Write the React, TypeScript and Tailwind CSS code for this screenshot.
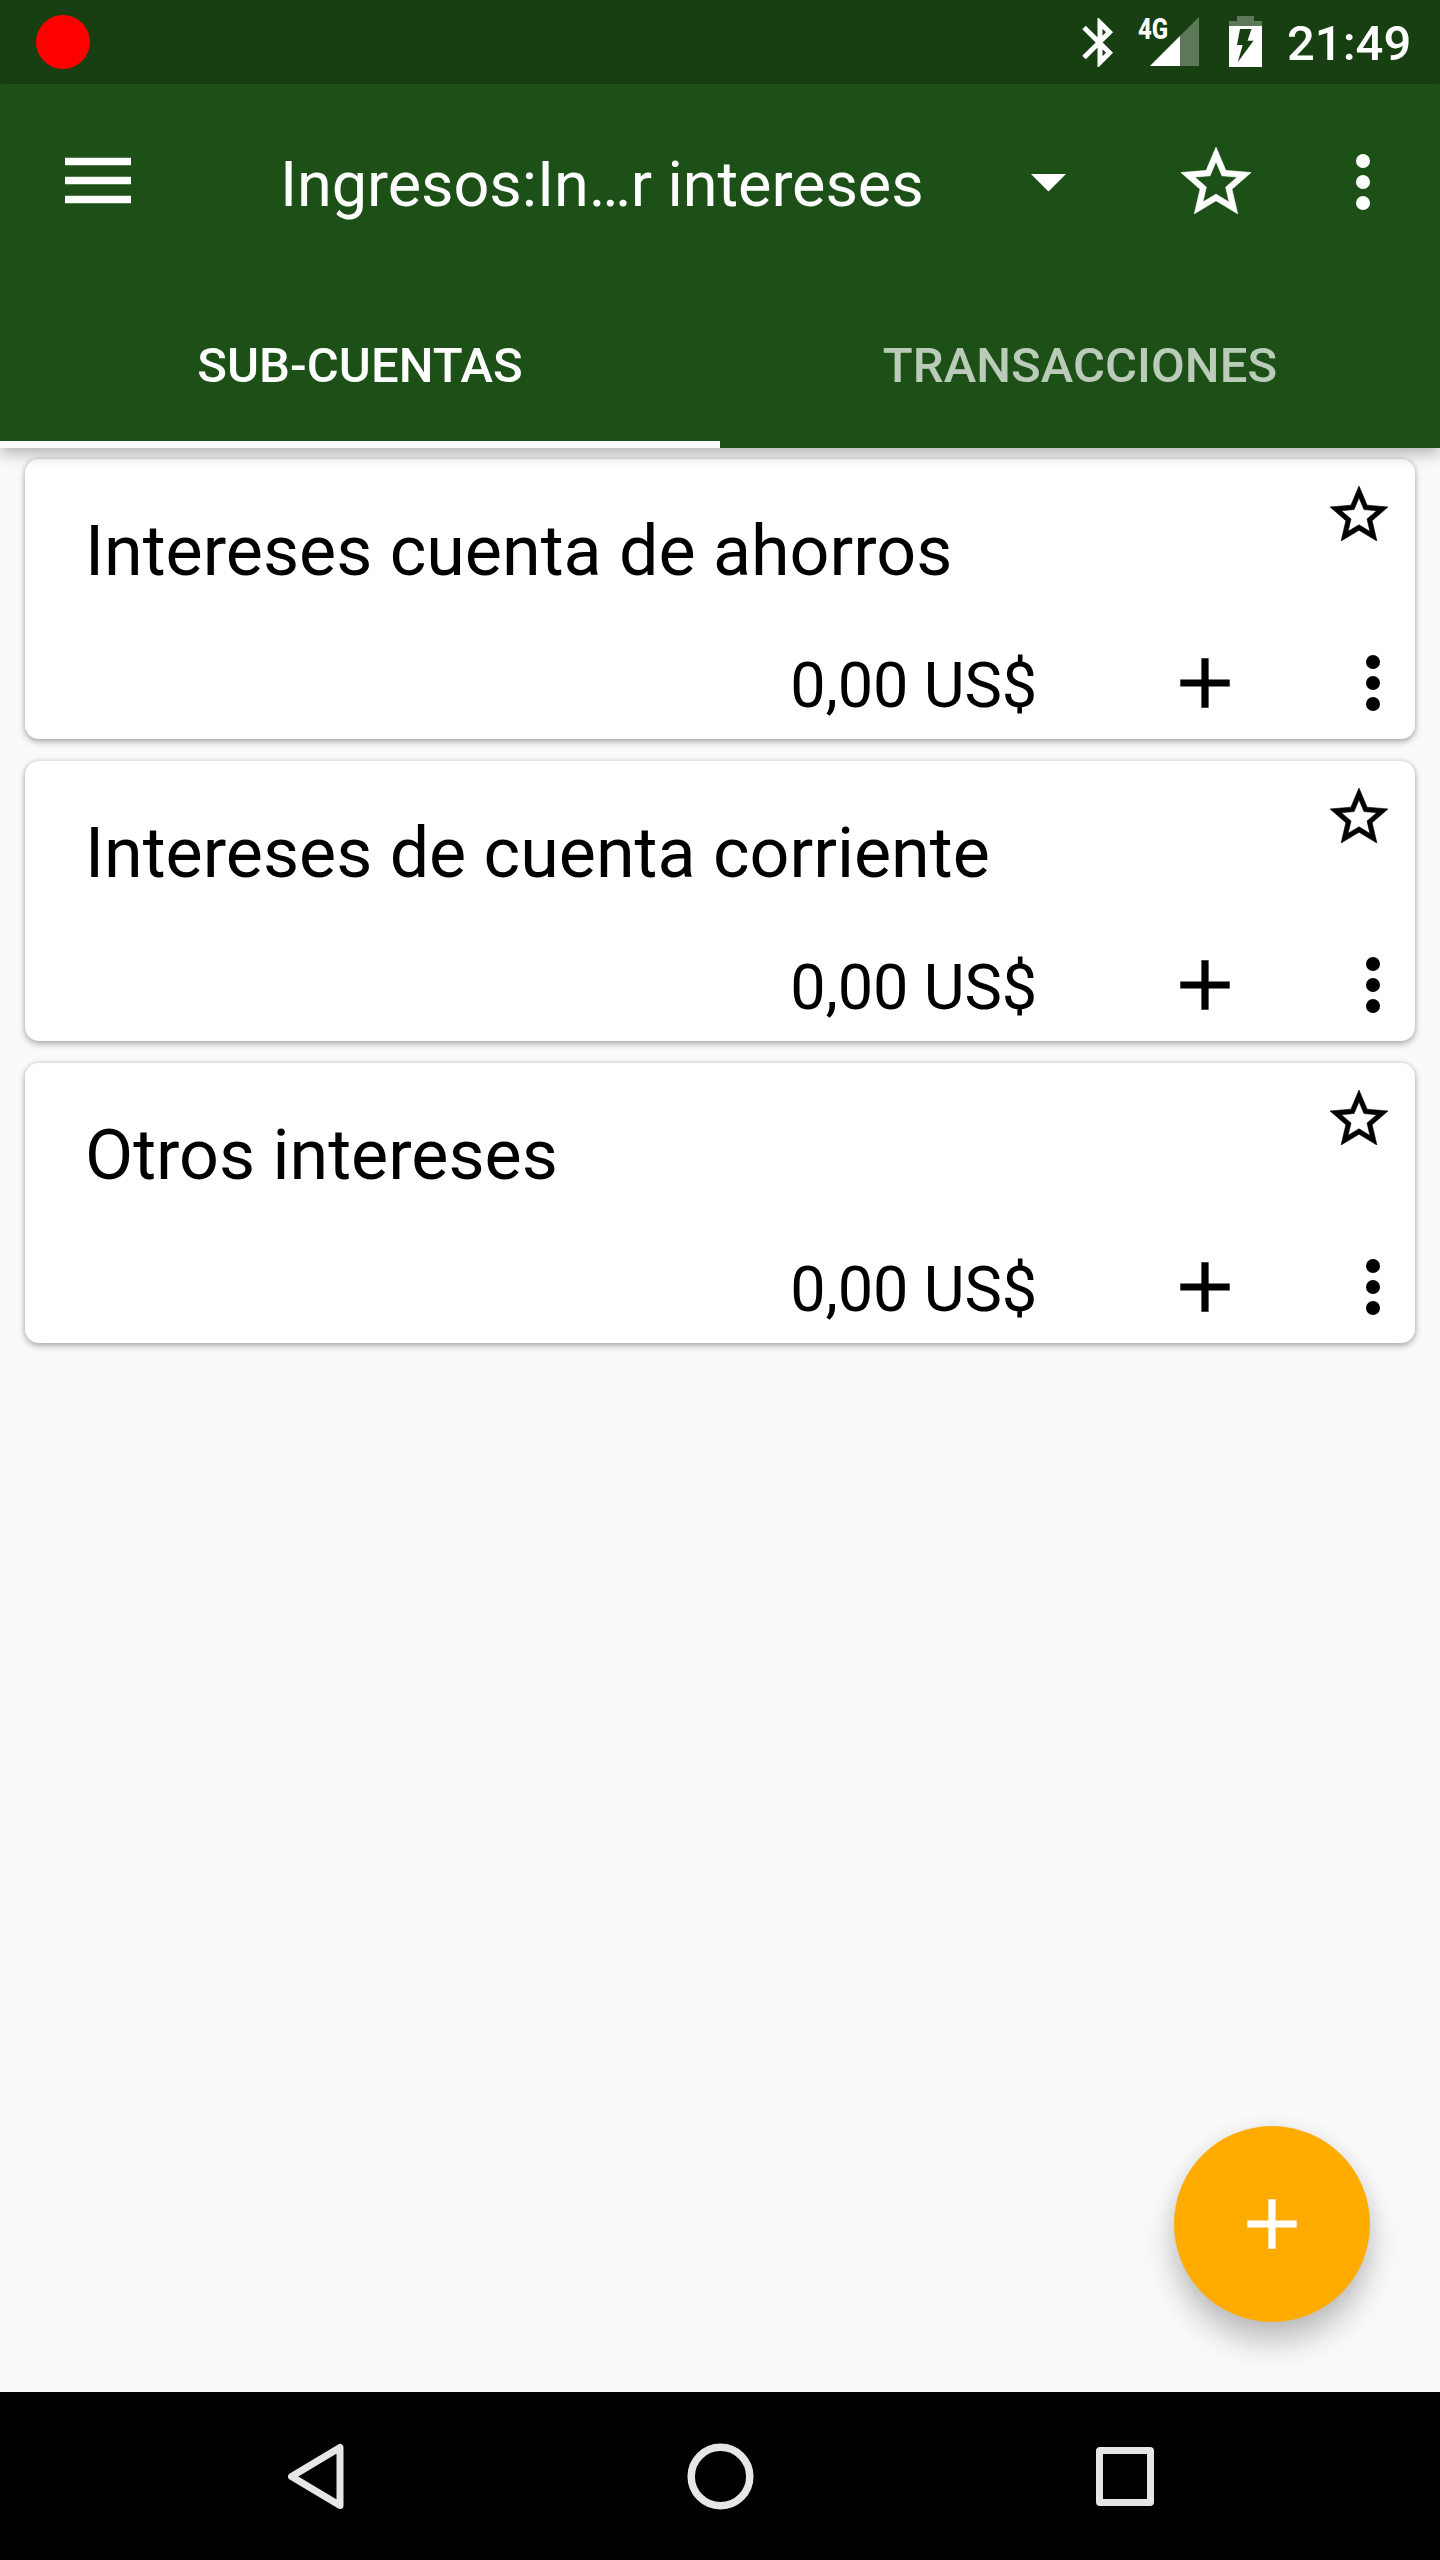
const accounts = [
  { name: "Intereses cuenta de ahorros", balance: "0,00 US$" },
  { name: "Intereses de cuenta corriente", balance: "0,00 US$" },
  { name: "Otros intereses", balance: "0,00 US$" },
];

function StarIcon({ className }: { className: string }) {
  return (
    <svg viewBox="2 2 20 19" className={className} fill="currentColor" stroke="currentColor" strokeWidth=".2">
      <path d="M22 9.240l-7.190-.62L12 2 9.190 8.630 2 9.240l5.460 4.730L5.820 21 12 17.270 18.180 21l-1.630-7.030L22 9.240zM12 15.400l-3.760 2.270 1-4.280-3.320-2.880 4.380-.38L12 6.100l1.710 4.040 4.380.38-3.320 2.880 1 4.280L12 15.400z" />
    </svg>
  );
}

function MoreIcon() {
  return (
    <svg viewBox="0 0 14 56" className="h-14 w-3.5" fill="currentColor">
      <circle cx="7" cy="7" r="7" />
      <circle cx="7" cy="28" r="7" />
      <circle cx="7" cy="49" r="7" />
    </svg>
  );
}

function PlusIcon() {
  return (
    <svg viewBox="0 0 50 50" className="size-[50px]" fill="none" stroke="currentColor" strokeWidth="7.2">
      <path d="M25 .3V49.7M.3 25H49.7" />
    </svg>
  );
}

function StatusBar() {
  return (
    <div className="flex h-[84px] items-start bg-[#173f12] pl-9 text-white">
      <div className="mt-[15px] size-[54px] rounded-full bg-[#ff0000]" />
      <svg viewBox="0 0 32 49" className="mt-[18px] ml-[992px] h-[49px] w-8" fill="none" stroke="currentColor" strokeWidth="5">
        <path d="M2 9.500 27.500 34.800 18 44.300V4.700L27.500 14.200 2 39.500" />
      </svg>
      <div className="relative mt-[17px] ml-9 h-[49px] w-[49px]">
        <svg viewBox="0 0 49 49" className="size-[49px]" fill="currentColor">
          <path d="M49 0V49H0Z" opacity=".3" />
          <path d="M30 19V49H0Z" />
        </svg>
        <span className="absolute -top-[3px] -left-[12px] origin-left scale-x-[.8] text-[30px] leading-[30px] font-extrabold">4G</span>
      </div>
      <svg viewBox="0 0 33 51" className="mt-4 ml-[30px] h-[51px] w-[33px]">
        <path d="M8 0H25V5H33V10H0V5H8Z" fill="#fff" opacity=".3" />
        <path d="M0 10H33V51H0Z" fill="#fff" />
        <path d="M11 13H22.500L18.500 24.700H24.500L8.700 46.300 13.700 29H8Z" fill="#173f12" />
      </svg>
      <span className="mt-[15px] ml-[25px] text-[49px] leading-[57px] font-medium">21:49</span>
    </div>
  );
}

function Toolbar() {
  return (
    <div className="flex h-[196px] items-start pl-[65px]">
      <svg viewBox="0 0 66 47" className="mt-[73px] h-[47px] w-[66px]" fill="currentColor">
        <path d="M0 .7H66V8.300H0ZM0 19.700H66V27.300H0ZM0 38.700H66V46.300H0Z" />
      </svg>
      <h1 className="mt-[64px] ml-[149px] w-[650px] text-[63px] leading-[74px] tracking-[-0.08px] whitespace-nowrap">Ingresos:In…r intereses</h1>
      <svg viewBox="0 0 35 17.500" className="mt-[90px] ml-[101px] h-[17.500px] w-[35px]" fill="currentColor">
        <path d="M0 0H35L17.500 17.500Z" />
      </svg>
      <StarIcon className="mt-[63px] ml-[115px] h-[67px] w-[70px]" />
      <div className="mt-[70px] ml-[105px]">
        <MoreIcon />
      </div>
    </div>
  );
}

function Tabs() {
  return (
    <div className="grid h-[168px] grid-cols-2 text-center text-[49px] leading-[57px] font-medium tracking-[0.06px]">
      <div className="border-b-[7px] border-white pt-[57px]">SUB-CUENTAS</div>
      <div className="pt-[57px] text-white/70">TRANSACCIONES</div>
    </div>
  );
}

function AccountCard({ name, balance }: { name: string; balance: string }) {
  return (
    <article className="flex h-[280px] flex-col justify-between rounded-[14px] bg-white pb-[18px] shadow-[0_3px_7px_rgba(0,0,0,0.28),0_0_5px_rgba(0,0,0,0.14)]">
      <div className="flex items-start justify-between pr-[27px] pl-[60px]">
        <h2 className="mt-[51px] text-[70px] leading-[82px]">{name}</h2>
        <StarIcon className="mt-[27px] h-[55px] w-[58px]" />
      </div>
      <div className="flex h-[76px] items-center justify-end pr-[35px]">
        <span className="mt-1.5 mr-[143px] text-[63px] leading-[74px] tracking-[-0.15px]">{balance}</span>
        <PlusIcon />
        <div className="ml-[136px]">
          <MoreIcon />
        </div>
      </div>
    </article>
  );
}

function NavBar() {
  return (
    <nav className="flex h-[168px] items-center bg-black pl-[287px] text-[#e6e6e6]">
      <svg viewBox="0 0 57 67" className="h-[67px] w-[57px]" fill="none" stroke="currentColor" strokeWidth="7" strokeLinejoin="round">
        <path d="M53 4.500V62.500L4.500 33.500Z" />
      </svg>
      <svg viewBox="0 0 67 67" className="ml-[343px] size-[67px]" fill="none" stroke="currentColor" strokeWidth="7.500">
        <circle cx="33.500" cy="33.500" r="29.300" />
      </svg>
      <div className="mt-px ml-[342px] h-[59px] w-[58px] rounded-[4px] border-[7px] border-current" />
    </nav>
  );
}

export default function App() {
  return (
    <div className="flex h-[2560px] w-[1440px] flex-col overflow-hidden bg-[#fafafa] font-['Roboto',sans-serif] text-black">
      <StatusBar />
      <header className="relative z-10 bg-[#1d5017] text-white shadow-[0_6px_14px_rgba(0,0,0,0.28)]">
        <Toolbar />
        <Tabs />
      </header>
      <main className="relative flex flex-1 flex-col gap-[22px] px-[25px] pt-[11px]">
        {accounts.map((account) => (
          <AccountCard key={account.name} {...account} />
        ))}
        <button className="absolute right-[70px] bottom-[70px] flex size-[196px] items-center justify-center rounded-full bg-[#ffab00] text-white shadow-[0_20px_32px_rgba(0,0,0,0.24),0_0_20px_rgba(0,0,0,0.06)]">
          <PlusIcon />
        </button>
      </main>
      <NavBar />
    </div>
  );
}
